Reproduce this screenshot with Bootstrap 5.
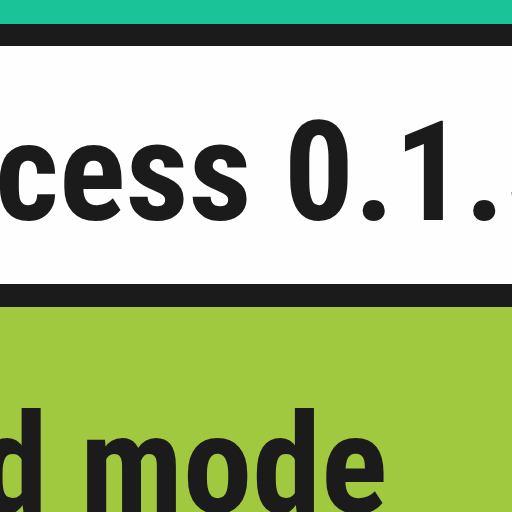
<!DOCTYPE html>
<html lang="en">
<head>
<meta charset="utf-8">
<meta name="viewport" content="width=device-width, initial-scale=1">
<title>Release notes</title>
<link rel="stylesheet" href="https://cdn.jsdelivr.net/npm/bootstrap@5.3.0/dist/css/bootstrap.min.css">
<style>
body{background:#1b1b1b;color:#1b1b1b;font-family:"Roboto Condensed",Roboto,sans-serif}
.strip{background:#1ac498;height:24px}
.title-band{background:#fefefe;padding:47px 0 31px;margin:22px 0 23px}
.mode-band{background:#a0c940;padding-top:79px}
.line{font-size:139px;line-height:160px;font-weight:700;white-space:nowrap}
.title-band .line{text-indent:-5px}
.mode-band .line{text-indent:-21px}
</style>
</head>
<body class="vh-100 d-flex flex-column overflow-hidden">
<div class="strip flex-shrink-0"></div>
<header class="title-band flex-shrink-0 overflow-hidden"><h1 class="line m-0">cess 0.1.5</h1></header>
<main class="mode-band flex-grow-1 overflow-hidden"><p class="line m-0">d mode</p></main>
<script src="https://cdn.jsdelivr.net/npm/bootstrap@5.3.0/dist/js/bootstrap.bundle.min.js"></script>
</body>
</html>
